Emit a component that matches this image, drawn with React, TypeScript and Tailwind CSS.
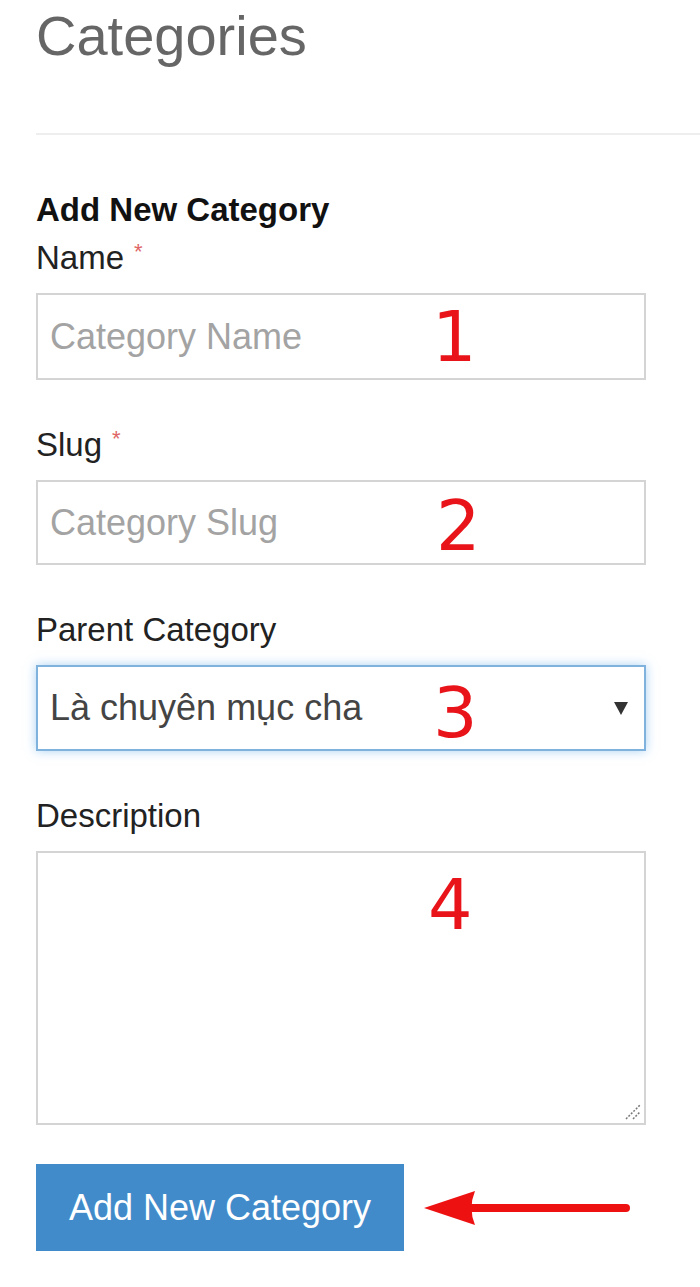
import React from "react";

// annotation digits drawn on top of the form fields
function Mark({ n, className }: { n: string; className: string }) {
  return (
    <span
      className={`pointer-events-none absolute font-[family-name:'DejaVu_Sans',sans-serif] text-[70px] leading-none text-[#e8141a] ${className}`}
    >
      {n}
    </span>
  );
}

function Label({ text, required }: { text: string; required?: boolean }) {
  return (
    <label className="block h-[33px] text-[33px] leading-[33px] text-[#222]">
      {text}
      {required && (
        <span className="relative -top-[10px] ml-[10px] text-[22px] leading-none text-[#e06666]">
          *
        </span>
      )}
    </label>
  );
}

export default function App() {
  return (
    <div className="min-h-[1287px] bg-white pl-9 font-[family-name:'Liberation_Sans',Arial,sans-serif]">
      <h1 className="pt-[8px] text-[56px] leading-[56px] text-[#666]">
        Categories
      </h1>

      <div className="mt-[69px] border-t-2 border-[#eeeeee]" />

      <form className="w-[610px] pt-[58px]">
        <h3 className="text-[33px] font-bold leading-[33px] text-[#111]">
          Add New Category
        </h3>

        <div className="mt-[15px]">
          <Label text="Name" required />
          <div className="relative mt-[19px]">
            <input
              type="text"
              placeholder="Category Name"
              className="block h-[87px] w-full border-2 border-[#d4d4d4] px-3 text-[36px] text-[#555] outline-none placeholder:text-[#a3a3a3]"
            />
            <Mark n="1" className="left-[396px] top-[9px]" />
          </div>
        </div>

        <div className="mt-[48px]">
          <Label text="Slug" required />
          <div className="relative mt-[19px]">
            <input
              type="text"
              placeholder="Category Slug"
              className="block h-[85px] w-full border-2 border-[#d4d4d4] px-3 text-[36px] text-[#555] outline-none placeholder:text-[#a3a3a3]"
            />
            <Mark n="2" className="left-[400px] top-[11px]" />
          </div>
        </div>

        <div className="mt-[48px]">
          <Label text="Parent Category" />
          <div className="relative mt-[19px] flex h-[86px] items-center justify-between border-2 border-[#7fb3de] px-3 shadow-[0_0_10px_rgba(102,175,233,0.55)]">
            <span className="text-[36px] text-[#444]">Là chuyên mục cha</span>
            <svg width="14" height="13" viewBox="0 0 14 13" className="mr-[4px]">
              <path d="M0 0 H14 L7 13 Z" fill="#333" />
            </svg>
            <Mark n="3" className="left-[395px] top-[11px]" />
          </div>
        </div>

        <div className="mt-[48px]">
          <Label text="Description" />
          <div className="relative mt-[19px]">
            <textarea className="block h-[274px] w-full resize-none border-2 border-[#d4d4d4] px-3 py-2 text-[36px] text-[#555] outline-none" />
            <Mark n="4" className="left-[392px] top-[19px]" />
            <svg
              width="18"
              height="18"
              viewBox="0 0 18 18"
              className="pointer-events-none absolute bottom-[5px] right-[5px]"
            >
              <path
                d="M3 17 L17 3 M10 17 L17 10"
                stroke="#777"
                strokeWidth="1.5"
                strokeDasharray="2 1.5"
              />
            </svg>
          </div>
        </div>

        <div className="mt-[39px] flex items-center">
          <button
            type="button"
            className="h-[87px] w-[368px] bg-[#428bca] text-[36px] text-white"
          >
            Add New Category
          </button>
          <svg width="210" height="40" viewBox="0 0 210 40" className="ml-[19px]">
            <path d="M1 20 L52 3 Q45 20 52 37 Z" fill="#ee1111" />
            <path
              d="M44 20 H203"
              stroke="#ee1111"
              strokeWidth="8"
              strokeLinecap="round"
            />
          </svg>
        </div>
      </form>
    </div>
  );
}
